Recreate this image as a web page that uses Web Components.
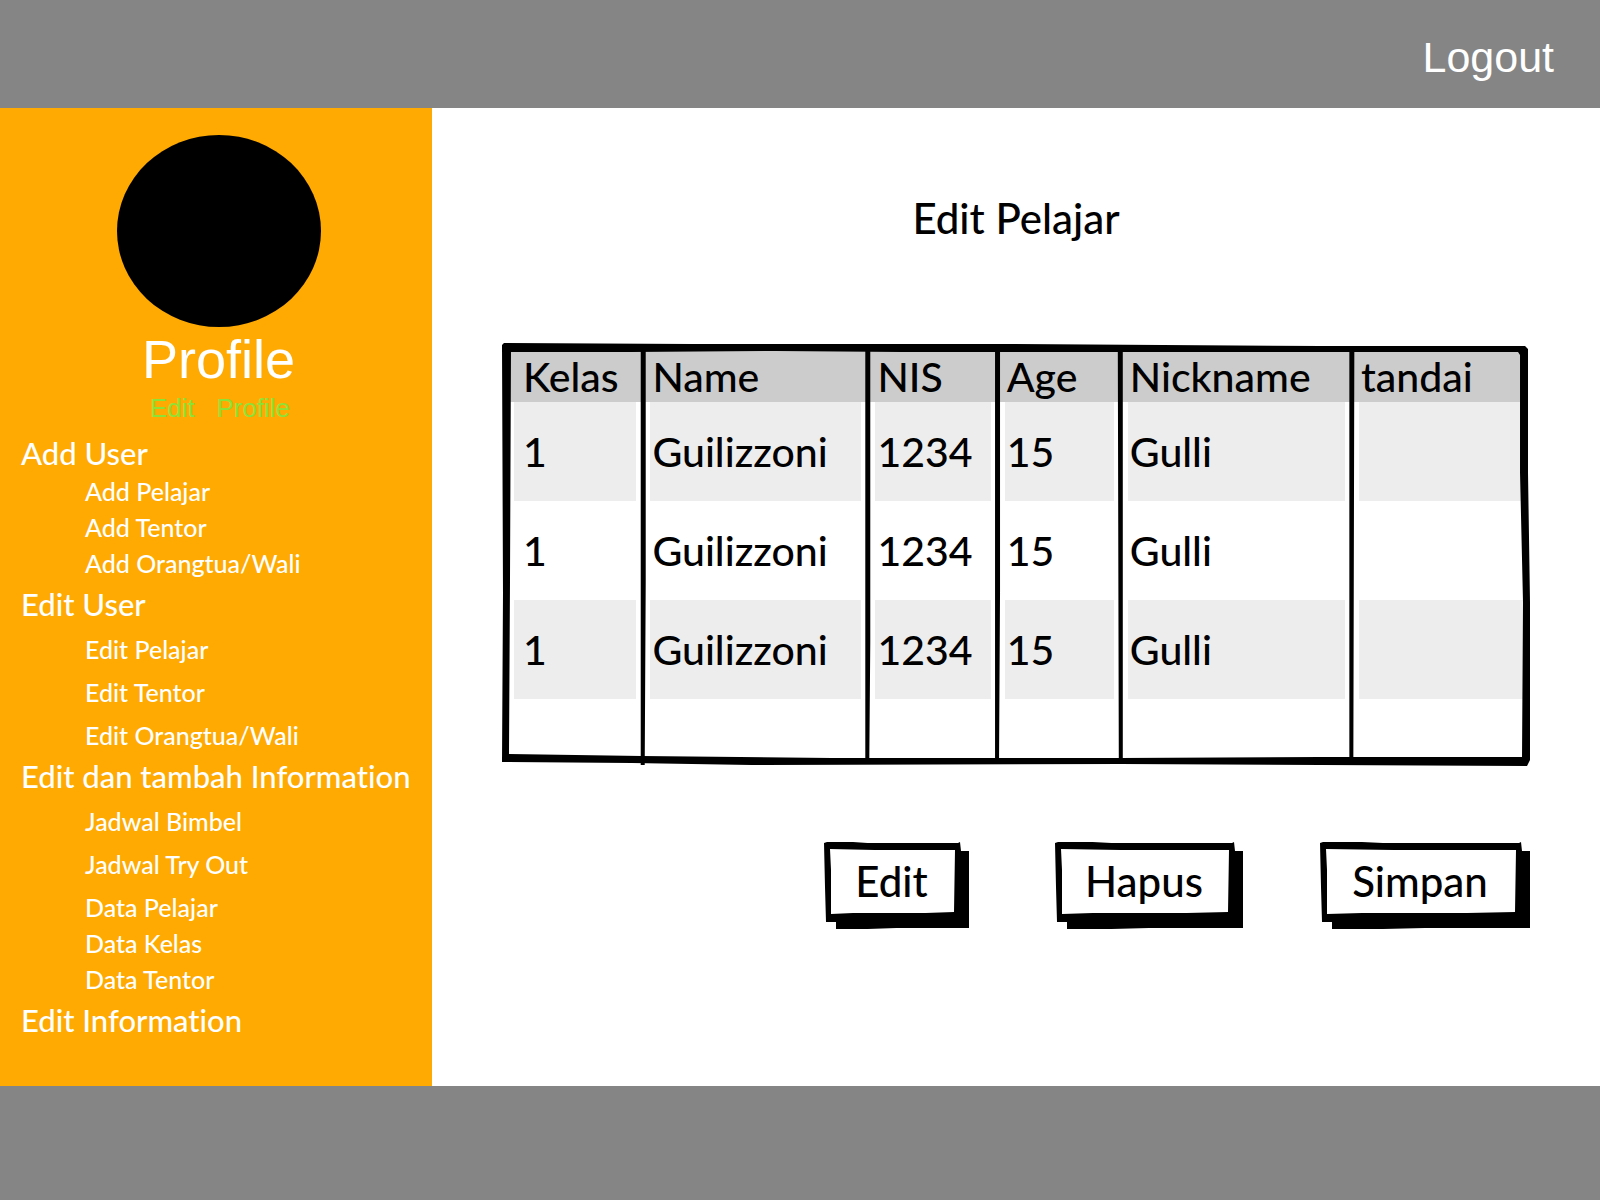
<!DOCTYPE html>
<html lang="id">
<head>
<meta charset="utf-8">
<meta name="viewport" content="width=device-width, initial-scale=1">
<title>Edit Pelajar</title>
<style>
  body { margin: 0; font-family: "Liberation Sans", Arial, sans-serif; }
</style>
</head>
<body>
<app-shell>
  <a slot="header" href="#logout">Logout</a>
  <side-bar slot="side">
    <profile-card slot="profile"></profile-card>
    <nav-row kind="heading">Add User</nav-row>
    <nav-row>Add Pelajar</nav-row>
    <nav-row>Add Tentor</nav-row>
    <nav-row>Add Orangtua/Wali</nav-row>
    <nav-row kind="heading">Edit User</nav-row>
    <nav-row loose>Edit Pelajar</nav-row>
    <nav-row loose>Edit Tentor</nav-row>
    <nav-row loose>Edit Orangtua/Wali</nav-row>
    <nav-row kind="heading">Edit dan tambah Information</nav-row>
    <nav-row loose>Jadwal Bimbel</nav-row>
    <nav-row loose>Jadwal Try Out</nav-row>
    <nav-row loose>Data Pelajar</nav-row>
    <nav-row>Data Kelas</nav-row>
    <nav-row>Data Tentor</nav-row>
    <nav-row kind="heading">Edit Information</nav-row>
  </side-bar>
  <student-editor></student-editor>
</app-shell>

<script>
const define = (name, html, Base = HTMLElement) => {
  const template = document.createElement("template");
  template.innerHTML = html;
  customElements.define(name, class extends Base {
    constructor() {
      super();
      this.attachShadow({ mode: "open" }).append(template.content.cloneNode(true));
    }
  });
};

define("app-shell", `
  <style>
    :host { display: flex; flex-direction: column; min-height: 100vh; background: #fff; }
    header, footer { background: #858585; }
    header { box-sizing: border-box; height: 108px; padding: 6px 46px 0; display: flex; align-items: center; justify-content: flex-end; }
    footer { height: 114px; }
    .body { flex: 1; display: flex; }
    aside { box-sizing: border-box; flex: 0 0 27%; min-width: 0; background: #ffaa02; }
    main { flex: 1; min-width: 0; }
    ::slotted(a) { color: #fff; font-size: 43px; line-height: 48px; text-decoration: none; }
  </style>
  <header><slot name="header"></slot></header>
  <div class="body">
    <aside><slot name="side"></slot></aside>
    <main><slot></slot></main>
  </div>
  <footer></footer>`);

define("side-bar", `
  <style>
    :host { display: block; padding: 27px 16px 0 21px; }
    nav { display: flex; flex-direction: column; margin-top: 3px; }
  </style>
  <slot name="profile"></slot>
  <nav><slot></slot></nav>`);

define("profile-card", `
  <style>
    :host { display: flex; flex-direction: column; align-items: center; }
    .avatar { width: 204px; height: 192px; border-radius: 50%; background: #000; }
    h2 { margin: 0; font-size: 54px; line-height: 64px; font-weight: 400; color: #fff; }
    a { padding-left: 3px; font-size: 26px; line-height: 34px; color: #8ee236; text-decoration: none; white-space: pre; }
  </style>
  <div class="avatar"></div>
  <h2>Profile</h2>
  <a href="#profile">Edit   Profile</a>`);

define("nav-row", `
  <style>
    :host { display: block; padding-left: 64px; font: 500 31px/36px Lato, sans-serif; font-variant-ligatures: none; color: #fff; white-space: nowrap; }
    :host([loose]) { padding-top: 7px; }
    :host([kind="heading"]) { padding: 7px 0 0; }
    a { color: inherit; text-decoration: none; font-size: 25px; line-height: 1; }
    :host([kind="heading"]) a { font-size: 31px; }
  </style>
  <a href="#menu"><slot></slot></a>`);

/* Redraws the hand-drawn frame for the button's width, so the stroke keeps its weight. */
class SketchFrame extends HTMLElement {
  connectedCallback() {
    this.observer = new ResizeObserver(() => this.draw());
    this.observer.observe(this);
    this.draw();
  }
  disconnectedCallback() { this.observer.disconnect(); }
  draw() {
    const w = this.offsetWidth;
    const [shadow, frame, face] = this.shadowRoot.querySelectorAll("path");
    shadow.setAttribute("d", `M12 76V87H${w * 0.3}L${w * 0.5} 86H${w}V9H${w - 12}Z`);
    frame.setAttribute("d", `M0 1L3 0H${w * 0.2}L${w * 0.3} 1H${w - 11}L${w - 9} 0L${w - 8} 9V80H2L1 45Z`);
    face.setAttribute("d", `M6 7L${w * 0.35} 8H${w - 14}L${w - 15} 70L${w * 0.7} 71H${w * 0.2}L7 72V28Z`);
  }
}

define("sketch-button", `
  <style>
    :host { display: block; }
    button { position: relative; width: 100%; height: 87px; padding: 0 10px 10px 0; border: 0; background: none; font: 500 42px/48px Lato, sans-serif; color: #000; cursor: pointer; }
    svg { position: absolute; inset: 0; width: 100%; height: 100%; }
    span { position: relative; }
  </style>
  <button type="button">
    <svg aria-hidden="true"><path/><path/><path fill="#fff"/></svg>
    <span><slot></slot></span>
  </button>`, SketchFrame);

define("student-table", `
  <style>
    :host { display: block; position: relative; padding: 8px 5px; }
    table { width: 100%; table-layout: fixed; border-collapse: separate; border-spacing: 0; font: 500 41px/48px Lato, sans-serif; color: #000; }
    th, td { box-sizing: border-box; text-align: left; font-weight: 500; white-space: nowrap; }
    th { height: 51px; padding: 0 0 0 9px; background: #ccc; }
    td { height: 99px; padding: 0 0 0 2px; border: solid #fff; border-width: 0 7px; }
    th:first-child { padding-left: 16px; }
    td:first-child { padding-left: 9px; }
    td:last-child { border-right-width: 2px; }
    tbody tr:nth-child(odd) td { background: #ededed; }
    tbody tr:last-child td { height: 59px; background: #fff; }
    svg { position: absolute; inset: 0; width: 100%; height: 100%; pointer-events: none; }
  </style>
  <table>
    <colgroup>
      <col style="width:13.4%"><col style="width:22.1%"><col style="width:12.7%">
      <col style="width:12.1%"><col style="width:22.7%"><col>
    </colgroup>
    <thead><tr><th>Kelas</th><th>Name</th><th>NIS</th><th>Age</th><th>Nickname</th><th>tandai</th></tr></thead>
    <tbody>
      <tr><td>1</td><td>Guilizzoni</td><td>1234</td><td>15</td><td>Gulli</td><td></td></tr>
      <tr><td>1</td><td>Guilizzoni</td><td>1234</td><td>15</td><td>Gulli</td><td></td></tr>
      <tr><td>1</td><td>Guilizzoni</td><td>1234</td><td>15</td><td>Gulli</td><td></td></tr>
      <tr><td></td><td></td><td></td><td></td><td></td><td></td></tr>
    </tbody>
  </table>
  <svg viewBox="0 0 1030 424" preserveAspectRatio="none" aria-hidden="true">
    <path fill-rule="evenodd" d="M0 2 L2 0 L190 1 L500 1 L820 3 L1025 3 L1028 6 L1028 130 L1030 260 V418 L1027 424 L620 422 L250 423 L130 421 L0 420 L1 250 Z
      M9 9 L130 9 L275 8 L400 9 L700 9 L1018 9 L1020 12 L1020 130 L1023 260 L1022 415 L820 415 L620 416 L330 416 L140 414 L7 412 L8 240 Z"/>
    <path d="M139 6 H144 L144 240 L143 423 H139 Z M364 6 H369 L369 300 L368 418 H364 Z M494 6 H499 L499 250 L498 418 H494 Z M617 6 H622 L622 418 H618 Z M849 6 H854 L853 423 H849 L849 240 Z"/>
  </svg>`);

define("student-editor", `
  <style>
    :host { display: block; padding: 85px 70px 0; }
    h1 { margin: 0; text-align: center; font: 500 42px/50px Lato, sans-serif; color: #000; }
    student-table { margin-top: 100px; }
    .actions { display: grid; grid-template-columns: 145px 86px 188px 77px 210px; justify-content: end; margin-top: 76px; }
    sketch-button:nth-child(2) { grid-column: 3; }
    sketch-button:nth-child(3) { grid-column: 5; }
  </style>
  <h1>Edit Pelajar</h1>
  <student-table></student-table>
  <div class="actions">
    <sketch-button>Edit</sketch-button>
    <sketch-button>Hapus</sketch-button>
    <sketch-button>Simpan</sketch-button>
  </div>`);
</script>
</body>
</html>
